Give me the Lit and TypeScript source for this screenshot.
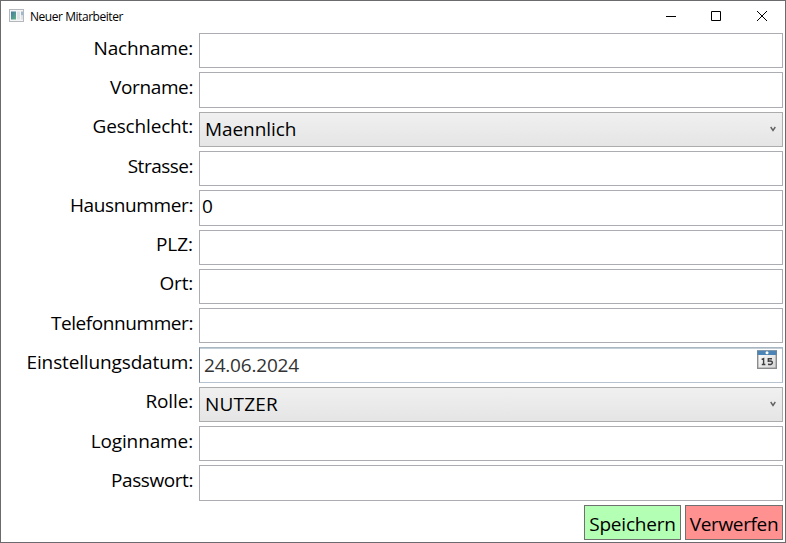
import { LitElement, html, css, svg } from "lit";
import { customElement } from "lit/decorators.js";
import { styleMap } from "lit/directives/style-map.js";

type Kind = "text" | "combo" | "date";
interface Field {
  label: string;
  kind: Kind;
  value?: string;
  /** letter spacing of the label and of the value, in px */
  track: number;
  valueTrack?: number;
}

const FIELDS: Field[] = [
  { label: "Nachname:", kind: "text", track: -0.18 },
  { label: "Vorname:", kind: "text", track: -0.38 },
  { label: "Geschlecht:", kind: "combo", value: "Maennlich", track: -0.17, valueTrack: -0.08 },
  { label: "Strasse:", kind: "text", track: -0.5 },
  { label: "Hausnummer:", kind: "text", value: "0", track: -0.38 },
  { label: "PLZ:", kind: "text", track: -0.05 },
  { label: "Ort:", kind: "text", track: -0.2 },
  { label: "Telefonnummer:", kind: "text", track: -0.42 },
  { label: "Einstellungsdatum:", kind: "date", value: "24.06.2024", track: -0.14, valueTrack: -0.2 },
  { label: "Rolle:", kind: "combo", value: "NUTZER", track: -0.15, valueTrack: 0.2 },
  { label: "Loginname:", kind: "text", track: -0.12 },
  { label: "Passwort:", kind: "text", track: -0.42 },
];

@customElement("app-root")
export class AppRoot extends LitElement {
  static styles = css`
    :host {
      display: block;
      font-family: "Segoe UI", "Open Sans", "Noto Sans", sans-serif;
      color: #000;
    }
    * {
      box-sizing: border-box;
    }
    .window {
      width: 786px;
      height: 543px;
      border: 1px solid #6b6b6d;
      background: #fff;
      overflow: hidden;
    }
    .titlebar {
      display: flex;
      align-items: center;
      height: 30px;
      padding-left: 8px;
    }
    .title {
      flex: 1;
      margin-left: 5px;
      font-size: 12px;
      letter-spacing: -0.45px;
      line-height: 16px;
      padding-top: 1px;
    }
    .control {
      display: grid;
      place-items: center;
      width: 46px;
      height: 28px;
    }
    .control:nth-of-type(1) {
      width: 45px;
    }
    svg {
      display: block;
    }
    .form {
      display: grid;
      grid-template-columns: 192px 584px;
      column-gap: 6px;
      row-gap: 4px;
      grid-auto-rows: 35.3125px;
      padding-top: 1.97px;
      font-size: 19px;
      line-height: 26px;
      white-space: nowrap;
    }
    .label {
      text-align: right;
      padding-top: 1.63px;
    }
    .field {
      display: flex;
      justify-content: space-between;
      border: 1px solid #abadb3;
      padding: 2px 2px 0;
    }
    .combo {
      border-color: #acacac;
      background: linear-gradient(#f0f0f0, #e5e5e5);
      padding: 3px 6px 0 5px;
    }
    .date {
      border-color: #a9b7c3 #a6b7c8 #b7c3d0 #7f8c99;
      box-shadow: inset 0 1px #c3ced6;
      padding: 4px 5px 0 4px;
      color: #333;
    }
    .arrow {
      margin-top: 10px;
    }
    .calendar {
      margin-top: -2px;
    }
    .actions {
      grid-column: 2;
      display: flex;
      justify-content: flex-end;
      gap: 4px;
    }
    .button {
      width: 97px;
      font: inherit;
      letter-spacing: -0.2px;
      line-height: 26px;
      text-align: center;
      padding: 3px 0 0;
      border: 1px solid #707070;
      border-radius: 0;
      color: #000;
      background: #b3ffb3;
    }
    .discard {
      width: 98px;
      letter-spacing: -0.35px;
      background: #ff9191;
    }
  `;

  private appIcon() {
    return html`<svg width="16" height="14" viewBox="0 0 16 14">
      <defs>
        <linearGradient id="pane" x1="0" y1="0" x2="1" y2="1">
          <stop offset="0" stop-color="#4776a5" />
          <stop offset="1" stop-color="#5fb483" />
        </linearGradient>
      </defs>
      <rect x="0.5" y="0.5" width="14" height="12" fill="#f5f5f6" stroke="#b4b8bc" />
      <rect x="2" y="2.5" width="5" height="8" fill="url(#pane)" />
      <rect x="8" y="2.5" width="3" height="8" fill="#dfe3e8" />
      <rect x="12" y="2.5" width="2" height="4" fill="#9fb9cc" />
      <rect x="12" y="6.5" width="2" height="4" fill="#dbe4e3" />
    </svg>`;
  }

  private arrow() {
    return html`<svg class="arrow" width="6" height="6" viewBox="0 0 6 6">
      <path d="M.7 1 3 4.4 5.3 1" fill="none" stroke="#606060" stroke-width="1.4" />
    </svg>`;
  }

  private calendar() {
    return html`<svg class="calendar" width="20" height="19" viewBox="0 0 20 19">
      <defs>
        <linearGradient id="sheet" x1="0" y1="0" x2="1" y2="1">
          <stop offset="0" stop-color="#fff" />
          <stop offset="1" stop-color="#d5d5d5" />
        </linearGradient>
      </defs>
      <rect x="0.7" y="0.7" width="18.6" height="17.6" fill="url(#sheet)" stroke="#8b8b8b" stroke-width="1.4" />
      <rect x="0.5" y="1" width="19" height="4" fill="#4c84b5" />
      <path d="M0 .5H20" stroke="#8298a9" />
      <circle cx="10" cy="2.8" r="1.5" fill="#fff" />
      <path
        d="M4.6 9.4 6.6 8.6V14.5M4.8 14.5H8.4M15 8.8H11.3V11.2Q15.4 10.6 15.4 12.7 15.2 15 11 14.3"
        fill="none"
        stroke="#404040"
        stroke-width="1.4"
      />
    </svg>`;
  }

  private tracking(px: number) {
    return styleMap({ letterSpacing: `${px}px` });
  }

  private row(f: Field) {
    return html`
      <div class="label"><span style=${this.tracking(f.track)}>${f.label}</span></div>
      <div class="field ${f.kind}">
        <span style=${this.tracking(f.valueTrack ?? 0)}>${f.value ?? ""}</span>
        ${f.kind === "combo" ? this.arrow() : f.kind === "date" ? this.calendar() : ""}
      </div>
    `;
  }

  render() {
    const controls = [
      svg`<path d="M0 5.5H10" />`,
      svg`<path d="M.5 .5H9.5V9.5H.5Z" />`,
      svg`<path d="M0 0 10 10M10 0 0 10" />`,
    ];
    return html`
      <div class="window">
        <div class="titlebar">
          ${this.appIcon()}
          <span class="title">Neuer Mitarbeiter</span>
          ${controls.map(
            (c) => html`<div class="control">
              <svg width="10" height="10" viewBox="0 0 10 10" fill="none" stroke="#000">${c}</svg>
            </div>`
          )}
        </div>
        <div class="form">
          ${FIELDS.map((f) => this.row(f))}
          <div class="actions">
            <button class="button">Speichern</button>
            <button class="button discard">Verwerfen</button>
          </div>
        </div>
      </div>
    `;
  }
}
